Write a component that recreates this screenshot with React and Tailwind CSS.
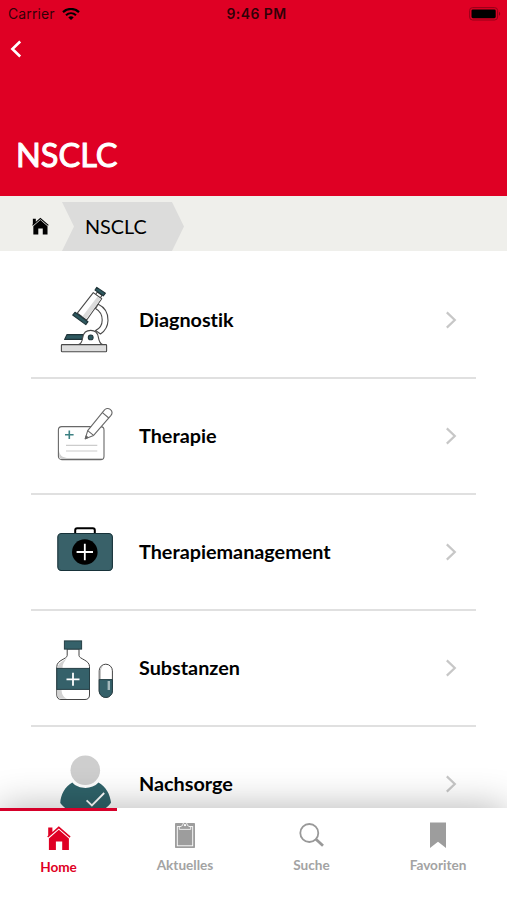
import React, { useState } from "react";

function MicroscopeIcon() {
  return (
    <svg className="w-16 h-[72px]" viewBox="0 0 64 72" fill="none" stroke="#4a4a4a" strokeWidth="1.1" strokeLinejoin="round">
      <path d="M44.3 20.3C51 23.5 54.2 30 54 36.5C53.8 42.5 51 47 46.5 50L41.5 46.5C46 44.5 48.2 40.5 48.2 36C48.2 31 46 27 41.5 24.5Z" fill="#fff" />
      <path d="M43.3 8L48 11.4L46 14.4L41.3 11Z" fill="#fff" />
      <path d="M39.3 8.6L47.7 14.8L32.7 36L23.3 29.2Z" fill="#fff" />
      <path d="M43.5 12.5L46.8 15L32.2 35L28.4 32.4Z" fill="#dcdcdc" stroke="none" />
      <path d="M42.8 3.4L51.4 9.2L49.3 11.8L41 6Z" fill="#2e5960" stroke="#1f3338" />
      <path d="M21 28.3L34 37.7L31.8 40.6L18.7 31Z" fill="#2e5960" stroke="#1f3338" />
      <path d="M13 50.6H29.5L28 55.4H10.6Z" fill="#2e5960" stroke="#1f3338" />
      <path d="M24.5 60.5C27.5 60 28.3 57 28.8 53.3C29.5 49 32.5 46.4 36.7 46.4C41 46.4 43.7 49 44.4 53.3C45 57 46 59.5 48.6 60.5Z" fill="#fff" />
      <circle cx="36.7" cy="53.4" r="2.4" fill="#2e5960" stroke="#1f3338" />
      <rect x="7.4" y="60.6" width="45.2" height="7.2" rx="0.8" fill="#dedede" />
    </svg>
  );
}

function PrescriptionIcon() {
  return (
    <svg className="w-16 h-[72px]" viewBox="0 0 64 72" fill="none" stroke="#686868" strokeWidth="1.1" strokeLinejoin="round">
      <rect x="4.4" y="26.6" width="45.6" height="33" rx="3.4" fill="#fff" />
      <path d="M5.2 51C6 56 9 58 15 58H49C48 59 47.5 59 46.5 59H8C6 59 5.2 58 5.2 56Z" fill="#cfcfcf" stroke="none" />
      <path d="M12 45.4H43.3M12 51H43.3" stroke="#cccccc" />
      <path d="M15.3 30.4V39M11 34.7H19.6" stroke="#3d8183" strokeWidth="1.6" />
      <path d="M31.3 38.7L33.7 30.6L50.1 10.4C51.6 8.3 54.2 7.8 56.2 9.4C58.3 11.1 58.6 13.4 56.8 15.7L39.6 35.4Z" fill="#fff" />
      <path d="M33.7 30.6L39.6 35.4M48.4 12.7L54.8 18" />
      <path d="M31.3 38.7L32.1 35.9L33.9 37.4Z" fill="#555" />
    </svg>
  );
}

function CaseIcon() {
  return (
    <svg className="w-16 h-[72px]" viewBox="0 0 64 72" fill="none">
      <path d="M21.2 17.2V14.2C21.2 12.8 22 12.2 23.2 12.2H38.8C40 12.2 40.8 12.8 40.8 14.2V17.2" stroke="#000" strokeWidth="2" />
      <rect x="3.8" y="17.5" width="54.6" height="37" rx="3.6" fill="#396169" stroke="#173239" strokeWidth="1.1" />
      <circle cx="30.8" cy="36" r="12.8" fill="#000" />
      <path d="M30.8 27.8V44.2M22.6 36H39" stroke="#fff" strokeWidth="1.8" />
    </svg>
  );
}

function MedicineIcon() {
  return (
    <svg className="w-16 h-[72px]" viewBox="0 0 64 72" fill="none" stroke="#444" strokeWidth="1">
      <path d="M13.2 17V23.5C13.2 27 2.8 28 2.8 34.5V63C2.8 66 4.6 67.5 7 67.5H31C33.8 67.5 35.5 66 35.5 63V34.5C35.5 28 25 27 25 23.5V17Z" fill="#fff" />
      <path d="M4 36V34.5C4.5 30.5 10.5 28.5 13 26C10 30 8.5 32 8.5 36ZM3.4 58H7.5C8 62.5 9 64.8 13 66.8H7.5C5 66.8 3.4 65.4 3.4 63Z" fill="#d2d2d2" stroke="none" />
      <rect x="10.4" y="8.9" width="17.2" height="8.2" fill="#35616a" stroke="#263f45" />
      <rect x="2.8" y="36.4" width="32.7" height="21" fill="#35616a" stroke="#263f45" />
      <path d="M19 40.8V53.8M12.5 47.3H25.5" stroke="#fff" strokeWidth="1.8" />
      <rect x="45.2" y="32.2" width="13.2" height="33.2" rx="6.6" fill="#fff" />
      <path d="M47 47V39C47 36.5 48 35 49.5 34C46.8 34.5 45.8 36.8 45.8 39V47Z" fill="#c4c4c4" stroke="none" />
      <path d="M45.2 47.6H58.4V58.8C58.4 62.5 55.5 65.4 51.8 65.4C48.1 65.4 45.2 62.5 45.2 58.8Z" fill="#35616a" stroke="#263f45" />
      <path d="M54.8 49V58" stroke="#a5b9bd" strokeWidth="2.4" />
    </svg>
  );
}

function PatientIcon() {
  return (
    <svg className="w-16 h-[72px]" viewBox="0 0 64 72" fill="none">
      <path d="M18.3 34.6C11 38.5 6.5 47 6.3 55C7.5 57 9.5 58.5 11.5 60.3H51.5C53.5 58.5 56 57 57 54.5C56 46.5 52 38.5 44.5 34.6C41 38.4 36.5 39.9 31.5 39.9C26.5 39.9 21.5 38.4 18.3 34.6Z" fill="#2f636a" />
      <circle cx="31.3" cy="22.2" r="14.8" fill="#cecece" />
      <path d="M32.6 52.3L37.9 57.4L50.2 45" stroke="#fff" strokeWidth="1.8" />
    </svg>
  );
}

function HouseIcon({ className }) {
  return (
    <svg className={className} viewBox="0 0 24 24" fill="currentColor">
      <path d="M1.2 1.6H5.4V6L11.8 0.3L23.6 10.5L22.6 11.7L11.8 2.5L1.2 11.6L0.2 10.5L1.2 9.6Z" />
      <path d="M11.8 3.7L21.9 12.4V24H15.2V15.6H8.9V24H1.9V12.4Z" />
    </svg>
  );
}

function ClipboardIcon() {
  return (
    <svg className="w-5 h-[26px]" viewBox="0 0 20 26" fill="none">
      <rect x="0" y="1" width="20" height="25" rx="0.8" fill="#9d9d9d" />
      <rect x="2.3" y="4.6" width="15.4" height="19.2" stroke="#fff" strokeWidth="0.9" />
      <path d="M4.3 7.4V5.2L7.6 3.4C7.8 1.4 8.6 0.4 10 0.4C11.4 0.4 12.2 1.4 12.4 3.4L15.7 5.2V7.4Z" fill="#9d9d9d" stroke="#fff" strokeWidth="0.8" />
      <circle cx="10" cy="3.2" r="1.1" fill="#fff" />
    </svg>
  );
}

function SearchIcon() {
  return (
    <svg className="w-[26px] h-[26px]" viewBox="0 0 26 26" fill="none" stroke="#999999">
      <circle cx="10.3" cy="11" r="9" strokeWidth="1.8" />
      <path d="M16.7 17L24 23.8" strokeWidth="2.8" />
    </svg>
  );
}

function BookmarkIcon() {
  return (
    <svg className="w-4 h-[26px]" viewBox="0 0 16 26" fill="#9d9d9d">
      <path d="M0 0.5H16V26L8 19.8L0 26Z" />
    </svg>
  );
}

const topics = [
  { title: "Diagnostik", Icon: MicroscopeIcon },
  { title: "Therapie", Icon: PrescriptionIcon },
  { title: "Therapiemanagement", Icon: CaseIcon },
  { title: "Substanzen", Icon: MedicineIcon },
  { title: "Nachsorge", Icon: PatientIcon }
];

const tabs = [
  { title: "Home", icon: <HouseIcon className="w-6 h-6" /> },
  { title: "Aktuelles", icon: <ClipboardIcon /> },
  { title: "Suche", icon: <SearchIcon /> },
  { title: "Favoriten", icon: <BookmarkIcon /> }
];

export default function App() {
  const [activeTab, setActiveTab] = useState("Home");

  return (
    <div className="flex flex-col w-[507px] h-[900px] overflow-hidden bg-white font-['Lato',sans-serif] text-black [font-variant-ligatures:none]">
      {/* Header */}
      <header className="flex flex-col h-[196px] shrink-0 bg-[#df0024]">
        <div className="grid grid-cols-3 items-center h-[27px] pl-2 pr-[6px] font-['Inter',sans-serif] text-[14px] text-black/80">
          <div className="flex items-center gap-[7px]">
            <span className="tracking-[0.1px]">Carrier</span>
            <svg className="w-[18px] h-3" viewBox="0 0 18 12" fill="none" stroke="#000" strokeWidth="2.2">
              <path d="M1 4.1C5.5 -0.1 12.5 -0.1 17 4.1" />
              <path d="M4 7.2C6.9 4.6 11.1 4.6 14 7.2" />
              <path d="M6.3 9.4C7.8 8 10.2 8 11.7 9.4L9 12Z" fill="#000" stroke="none" />
            </svg>
          </div>
          <span className="pl-1 text-center font-semibold whitespace-nowrap tracking-[0.4px]">9:46 PM</span>
          <svg className="w-8 h-[14px] justify-self-end" viewBox="0 0 32 14" fill="none">
            <rect x="0.6" y="0.6" width="28" height="12.4" rx="3" stroke="#8c0017" strokeWidth="0.9" />
            <rect x="2.5" y="2.4" width="24.2" height="8.8" rx="1.4" fill="#000" />
            <path d="M30 4.8C31.6 5.5 31.6 8.1 30 8.8Z" fill="#8c0017" />
          </svg>
        </div>
        <button className="flex w-8 h-11 items-center pl-[10px]">
          <svg className="w-3 h-[18px]" viewBox="0 0 12 18" fill="none" stroke="#fff" strokeWidth="2.6">
            <path d="M10.2 1.5L2.4 9L10.2 16.5" />
          </svg>
        </button>
        <h1 className="mt-auto mb-[21px] pl-4 text-[32.5px] leading-10 font-normal text-white [-webkit-text-stroke:1px_white]">
          NSCLC
        </h1>
      </header>

      {/* Breadcrumb */}
      <nav className="flex h-[55px] shrink-0 items-end bg-[#efefeb] pl-8">
        <div className="flex h-[49px] w-[30px] items-center pb-[2px]">
          <HouseIcon className="w-[17px] h-[18px]" />
        </div>
        <div className="flex h-[49px] w-[122px] items-center bg-[#dcdcdb] pl-[23px] text-[19.8px] [clip-path:polygon(0_0,110px_0,100%_50%,110px_100%,0_100%,12px_50%)]">
          NSCLC
        </div>
      </nav>

      {/* Topics */}
      <main className="flex-1 min-h-0 overflow-hidden px-[31px] pt-3">
        {topics.map(({ title, Icon }) => (
          <div key={title} className="flex h-[116px] items-center border-b-2 border-[#e0e0e0] pl-[23px] pr-[19px]">
            <Icon />
            <span className="ml-[21px] flex-1 text-[19.8px] font-bold">{title}</span>
            <svg className="w-3 h-[18px]" viewBox="0 0 12 18" fill="none" stroke="#c7c7c7" strokeWidth="2.2">
              <path d="M1.8 1.4L9.8 9L1.8 16.6" />
            </svg>
          </div>
        ))}
      </main>

      {/* Tab bar */}
      <footer className="relative h-[92px] shrink-0 flex gap-[9.5px] bg-white shadow-[0_0_38px_rgba(0,0,0,0.3)]">
        {tabs.map((tab) => (
          <button
            key={tab.title}
            onClick={() => setActiveTab(tab.title)}
            className={`relative flex w-[117px] flex-col items-center text-[13.6px] leading-5 font-bold ${
              activeTab === tab.title ? "pt-[18px] text-[#df0024]" : "pt-[14px] text-[#a3a3a3]"
            }`}
          >
            {activeTab === tab.title && <span className="absolute top-0 left-0 h-[3px] w-full bg-[#d6002a]" />}
            {tab.icon}
            <span className="mt-[7px]">{tab.title}</span>
          </button>
        ))}
      </footer>
    </div>
  );
}
